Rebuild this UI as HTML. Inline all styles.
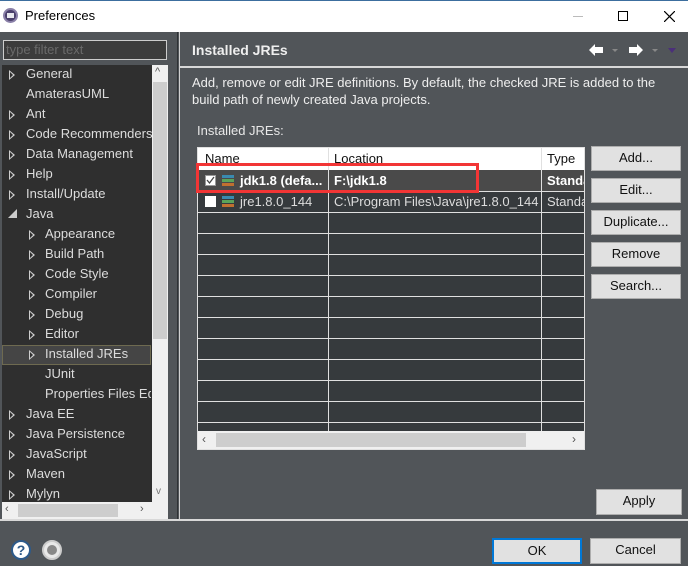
<!DOCTYPE html>
<html><head><meta charset="utf-8"><style>
*{margin:0;padding:0;box-sizing:border-box}
body{width:688px;height:566px;overflow:hidden;background:#515559;font-family:"Liberation Sans","Noto Sans CJK SC",sans-serif;font-size:13px;color:#e8e8e8;position:relative}
.a{position:absolute}
.t{position:absolute;white-space:nowrap}
.btn{position:absolute;background:#e1e1e1;border:1px solid #adadad;color:#111;text-align:center;line-height:22px;font-size:13px}
.tri{position:absolute;width:0;height:0;border-top:5px solid transparent;border-bottom:5px solid transparent;border-left:6px solid #cfcfcf}
.tri:after{content:"";position:absolute;left:-5px;top:-3px;border-top:3px solid transparent;border-bottom:3px solid transparent;border-left:3px solid #2f2f2f}
.ti{position:absolute;white-space:nowrap;color:#dcdcdc;font-size:13px;line-height:20px}
.hl{position:absolute;left:198px;width:386px;height:1px;background:#e0e0e0}
</style></head><body>
<div class="a" style="left:0;top:0;width:688px;height:32px;background:#fff;border-top:1px solid #3c6e9e"></div>
<div class="a" style="left:3px;top:8px;width:15px;height:15px;border-radius:50%;background:#4a3f6b;border:2px solid #8a80a8"></div>
<div class="a" style="left:7px;top:13px;width:7px;height:5px;background:#e8e8ee"></div>
<div class="t" style="left:25px;top:8px;color:#000;font-size:13px">Preferences</div>
<div class="a" style="left:573px;top:16px;width:10px;height:1px;background:#bbb"></div>
<div class="a" style="left:618px;top:11px;width:10px;height:10px;border:1px solid #000"></div>
<svg class="a" style="left:664px;top:11px" width="11" height="11"><path d="M0 0L11 11M11 0L0 11" stroke="#000" stroke-width="1.2"/></svg>

<div class="a" style="left:3px;top:40px;width:164px;height:20px;border:1px solid #ccc;background:#3c3c3c"></div>
<div class="t" style="left:6px;top:42px;color:#6a6a6a">type filter text</div>
<div class="a" style="left:2px;top:65px;width:150px;height:437px;background:#2f2f2f"></div>
<div class="a" style="left:152px;top:65px;width:16px;height:437px;background:#f0f0f0"></div>
<div class="a" style="left:153px;top:82px;width:14px;height:257px;background:#cdcdcd"></div>
<div class="t" style="left:155px;top:66px;color:#555;font-size:11px">^</div>
<div class="t" style="left:156px;top:486px;color:#777;font-size:10px">v</div>
<div class="a" style="left:2px;top:502px;width:166px;height:17px;background:#f0f0f0"></div>
<div class="a" style="left:18px;top:504px;width:100px;height:13px;background:#cdcdcd"></div>
<div class="t" style="left:5px;top:503px;color:#555;font-size:11px">‹</div>
<div class="t" style="left:140px;top:503px;color:#555;font-size:11px">›</div>
<div class="a" style="left:2px;top:345px;width:149px;height:20px;background:#454545;border:1px solid #6e6a50"></div>

<div class="tri" style="left:9px;top:70px"></div><div class="ti" style="left:26px;top:64px">General</div>
<div class="ti" style="left:26px;top:84px">AmaterasUML</div>
<div class="tri" style="left:9px;top:110px"></div><div class="ti" style="left:26px;top:104px">Ant</div>
<div class="tri" style="left:9px;top:130px"></div><div class="ti" style="left:26px;top:124px">Code Recommenders</div>
<div class="tri" style="left:9px;top:150px"></div><div class="ti" style="left:26px;top:144px">Data Management</div>
<div class="tri" style="left:9px;top:170px"></div><div class="ti" style="left:26px;top:164px">Help</div>
<div class="tri" style="left:9px;top:190px"></div><div class="ti" style="left:26px;top:184px">Install/Update</div>
<div class="t" style="left:8px;top:207px;color:#ccc;font-size:9px">◢</div><div class="ti" style="left:26px;top:204px">Java</div>
<div class="tri" style="left:29px;top:230px"></div><div class="ti" style="left:45px;top:224px">Appearance</div>
<div class="tri" style="left:29px;top:250px"></div><div class="ti" style="left:45px;top:244px">Build Path</div>
<div class="tri" style="left:29px;top:270px"></div><div class="ti" style="left:45px;top:264px">Code Style</div>
<div class="tri" style="left:29px;top:290px"></div><div class="ti" style="left:45px;top:284px">Compiler</div>
<div class="tri" style="left:29px;top:310px"></div><div class="ti" style="left:45px;top:304px">Debug</div>
<div class="tri" style="left:29px;top:330px"></div><div class="ti" style="left:45px;top:324px">Editor</div>
<div class="tri" style="left:29px;top:350px"></div><div class="ti" style="left:45px;top:344px">Installed JREs</div>
<div class="ti" style="left:45px;top:364px">JUnit</div>
<div class="ti" style="left:45px;top:384px;width:106px;overflow:hidden">Properties Files Editor</div>
<div class="tri" style="left:9px;top:410px"></div><div class="ti" style="left:26px;top:404px">Java EE</div>
<div class="tri" style="left:9px;top:430px"></div><div class="ti" style="left:26px;top:424px">Java Persistence</div>
<div class="tri" style="left:9px;top:450px"></div><div class="ti" style="left:26px;top:444px">JavaScript</div>
<div class="tri" style="left:9px;top:470px"></div><div class="ti" style="left:26px;top:464px">Maven</div>
<div class="tri" style="left:9px;top:490px"></div><div class="ti" style="left:26px;top:484px;height:18px;overflow:hidden">Mylyn</div>

<div class="a" style="left:177px;top:32px;width:1px;height:488px;background:#2f3235"></div>
<div class="a" style="left:179px;top:32px;width:1px;height:488px;background:#d0d0d0"></div>
<div class="a" style="left:180px;top:66px;width:508px;height:2px;background:#d8d8d8"></div>
<div class="a" style="left:0;top:519px;width:688px;height:2px;background:#d8d8d8"></div>

<div class="t" style="left:192px;top:42px;font-weight:bold;font-size:14px;color:#eee">Installed JREs</div>
<svg class="a" style="left:586px;top:40px" width="100" height="20">
<path d="M3 10L9 4V7H17V13H9V16Z" fill="#fff"/>
<path d="M112 0" />
<path d="M112 0"/>
<path d="M113 0"/>
<path d="M112 0"/>
<path d="M113 0"/>
<path d="M26 9L32 9L29 12Z" fill="#888"/>
<path d="M57 10L51 4V7H43V13H51V16Z" fill="#fff"/>
<path d="M66 9L72 9L69 12Z" fill="#888"/>
<path d="M82 8L90 8L86 13Z" fill="#4b2f7a"/>
</svg>

<div class="t" style="left:192px;top:74px;line-height:17px;color:#eee">Add, remove or edit JRE definitions. By default, the checked JRE is added to the<br>build path of newly created Java projects.</div>
<div class="t" style="left:197px;top:123px">Installed JREs:</div>

<div class="a" style="left:197px;top:147px;width:388px;height:303px;background:#363a3d;border:1px solid #e0e0e0"></div>
<div class="a" style="left:198px;top:148px;width:386px;height:22px;background:#fff"></div>
<div class="a" style="left:328px;top:148px;width:1px;height:22px;background:#e0e0e0"></div>
<div class="a" style="left:541px;top:148px;width:1px;height:22px;background:#e0e0e0"></div>
<div class="t" style="left:205px;top:151px;color:#111">Name</div>
<div class="t" style="left:334px;top:151px;color:#111">Location</div>
<div class="t" style="left:547px;top:151px;color:#111">Type</div>
<div class="a" style="left:198px;top:170px;width:386px;height:21px;background:#4a4a4a"></div>
<div class="a" style="left:328px;top:170px;width:1px;height:261px;background:#e0e0e0"></div>
<div class="a" style="left:541px;top:170px;width:1px;height:261px;background:#e0e0e0"></div>
<div class="hl" style="top:191px"></div><div class="hl" style="top:212px"></div><div class="hl" style="top:233px"></div><div class="hl" style="top:254px"></div><div class="hl" style="top:275px"></div><div class="hl" style="top:296px"></div><div class="hl" style="top:317px"></div><div class="hl" style="top:338px"></div><div class="hl" style="top:359px"></div><div class="hl" style="top:380px"></div><div class="hl" style="top:401px"></div><div class="hl" style="top:422px"></div>
<div class="a" style="left:205px;top:175px;width:11px;height:11px;background:#fff;border:1px solid #999"></div>
<svg class="a" style="left:205px;top:175px" width="11" height="11"><path d="M2 5L4.5 8L9 2" stroke="#444" stroke-width="1.3" fill="none"/></svg>
<div class="a" style="left:222px;top:175px;width:12px;height:3px;background:#3a8ab0"></div><div class="a" style="left:222px;top:179px;width:12px;height:3px;background:#5aa35a"></div><div class="a" style="left:222px;top:183px;width:12px;height:3px;background:#c07030"></div>
<div class="t" style="left:240px;top:173px;font-weight:bold;color:#fff">jdk1.8 (defa...</div>
<div class="t" style="left:334px;top:173px;font-weight:bold;color:#fff">F:\jdk1.8</div>
<div class="t" style="left:547px;top:173px;font-weight:bold;color:#fff;width:37px;overflow:hidden">Standard VM</div>
<div class="a" style="left:205px;top:196px;width:11px;height:11px;background:#fff"></div>
<div class="a" style="left:222px;top:196px;width:12px;height:3px;background:#3a8ab0"></div><div class="a" style="left:222px;top:200px;width:12px;height:3px;background:#5aa35a"></div><div class="a" style="left:222px;top:204px;width:12px;height:3px;background:#c07030"></div>
<div class="t" style="left:240px;top:194px;color:#ddd">jre1.8.0_144</div>
<div class="t" style="left:334px;top:194px;color:#ddd">C:\Program Files\Java\jre1.8.0_144</div>
<div class="t" style="left:547px;top:194px;color:#ddd;width:37px;overflow:hidden">Standard VM</div>
<div class="a" style="left:198px;top:431px;width:386px;height:18px;background:#f0f0f0"></div>
<div class="a" style="left:216px;top:433px;width:310px;height:14px;background:#cdcdcd"></div>
<div class="t" style="left:202px;top:432px;color:#555;font-size:12px">‹</div>
<div class="t" style="left:572px;top:432px;color:#555;font-size:12px">›</div>
<div class="a" style="left:196px;top:163px;width:283px;height:30px;border:3px solid #f23535"></div>

<div class="btn" style="left:591px;top:146px;width:90px;height:25px">Add...</div>
<div class="btn" style="left:591px;top:178px;width:90px;height:25px">Edit...</div>
<div class="btn" style="left:591px;top:210px;width:90px;height:25px">Duplicate...</div>
<div class="btn" style="left:591px;top:242px;width:90px;height:25px">Remove</div>
<div class="btn" style="left:591px;top:274px;width:90px;height:25px">Search...</div>
<div class="btn" style="left:596px;top:489px;width:86px;height:26px">Apply</div>
<div class="btn" style="left:492px;top:538px;width:90px;height:26px;border:2px solid #0078d7;line-height:22px">OK</div>
<div class="btn" style="left:590px;top:538px;width:91px;height:26px">Cancel</div>

<div class="a" style="left:11px;top:540px;width:20px;height:20px;border-radius:50%;background:#fff;border:2px solid #2d5a8a;color:#2d5a8a;font-weight:bold;text-align:center;line-height:16px;font-size:14px">?</div>
<div class="a" style="left:42px;top:540px;width:20px;height:20px;border-radius:50%;background:#e8e8e8;border:2px solid #ccc"></div>
<div class="a" style="left:47px;top:545px;width:10px;height:10px;border-radius:50%;background:#888"></div>
</body></html>
